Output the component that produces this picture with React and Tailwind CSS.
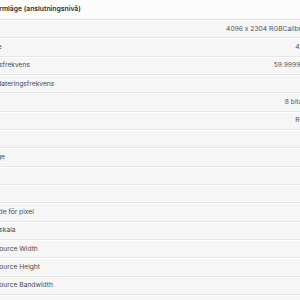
export default function App() {
  const rows = [
    ["", "4096 x 2304 RGBCalibrated"],
    ["Läge", "4 HBR"],
    ["Ringsfrekvens", "59.99999 Hz"],
    ["Uppdateringsfrekvens", ""],
    ["", "8 bitar/ch"],
    ["", "RGB 4"],
    ["", ""],
    ["Färge", ""],
    ["", ""],
    ["", ""],
    ["Bitläde för pixel", ""],
    ["Gråskala", ""],
    ["Source Width", ""],
    ["Source Height", ""],
    ["Source Bandwidth", ""],
    ["", ""],
  ];
  const shifts = ["", "-ml-[14px]", "-ml-[15px]", "-ml-[16px]", "", "", "", "-ml-[13px]", "", "", "-ml-[15px]", "-ml-[12px]", "-ml-[5px]", "-ml-[5px]", "-ml-[5px]", ""];
  return (
    <div className="w-[300px] h-[300px] overflow-hidden bg-[#fcfcfc] [font-feature-settings:'calt'_0]" style={{ fontFamily: "Inter, 'Noto Sans', sans-serif" }}>
      <div className="w-[345px] -ml-[15px] flex flex-col">
        <div className="h-[19px] flex items-center pl-[2px] bg-[#fcfcfc]">
          <span className="text-[6.8px] font-semibold text-[#2e2e2e] whitespace-nowrap">Skärmläge (anslutningsnivå)</span>
        </div>
        {rows.map(([label, value], i) => (
          <div
            key={i}
            className="h-[18.33px] shrink-0 flex items-center justify-between bg-[#f6f6f6] border-t border-[#e6e6e6] shadow-[inset_0_1px_0_#ffffff] pr-[15px]"
          >
            <span className="pl-[15px] flex whitespace-nowrap text-[6.7px] text-[#4a4a4a]">
              <span className={shifts[i]}>{label}</span>
            </span>
            <span className="whitespace-nowrap text-[6.7px] text-[#555555]">{value}</span>
          </div>
        ))}
      </div>
    </div>
  );
}
